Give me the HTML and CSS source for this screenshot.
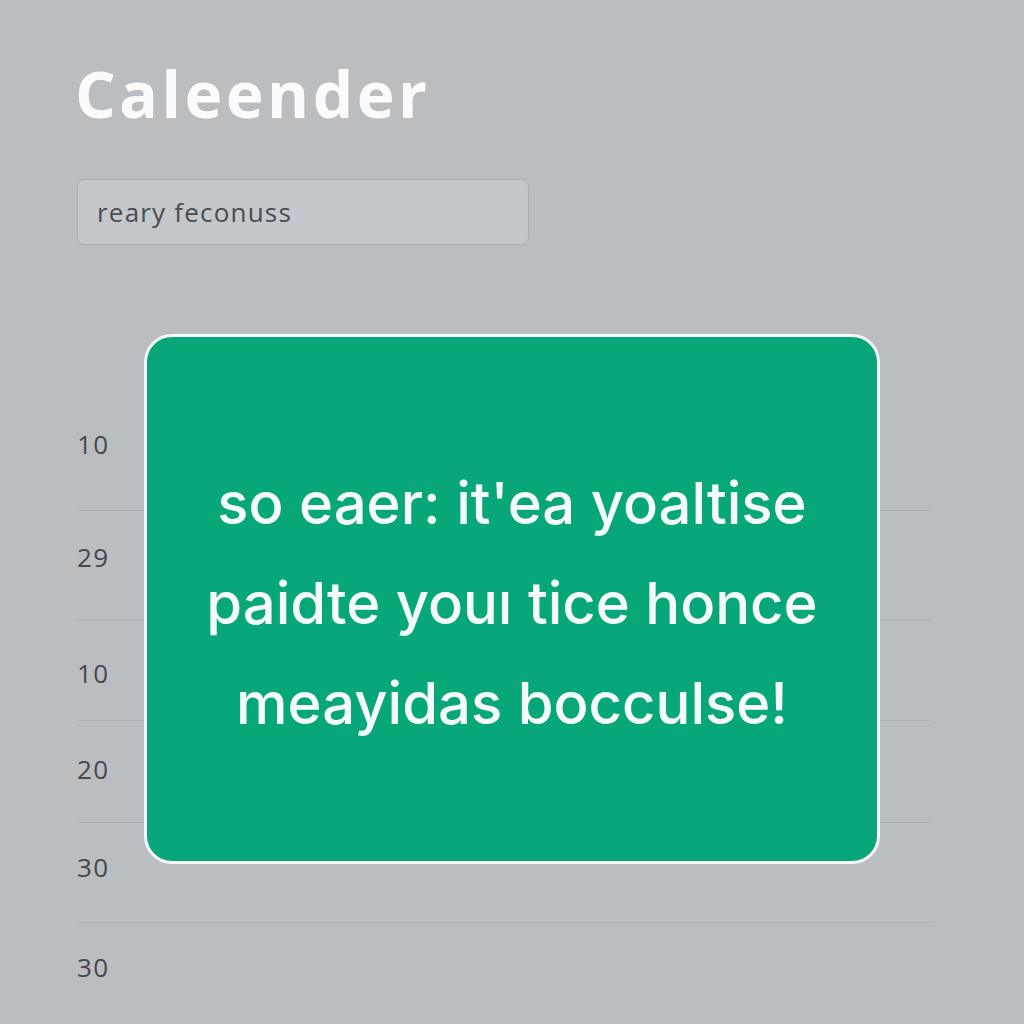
FILE: index.html
```html
<!DOCTYPE html>
<html lang="en">
<head>
    <meta charset="UTF-8">
    <meta name="viewport" content="width=device-width, initial-scale=1.0">
    <title>Caleender</title>
    <link rel="stylesheet" href="styles.css">
</head>
<body>

    <h1 class="title">Caleender</h1>

    <!-- Search -->
    <div class="search">
        <input type="text" class="search-input" value="reary feconuss">
    </div>

    <!-- Day schedule -->
    <div class="schedule">
        <div class="row row-1"><span class="time">10</span></div>
        <div class="row row-2"><span class="time">29</span></div>
        <div class="row row-3"><span class="time">10</span></div>
        <div class="row row-4"><span class="time">20</span></div>
        <div class="row row-5"><span class="time">30</span></div>
        <div class="row row-6"><span class="time">30</span></div>

        <div class="event">
            <p>so eaer: it'ea yoaltise<br>paidte youı tice honce<br>meayidas bocculse!</p>
        </div>
    </div>

</body>
</html>
```

FILE: styles.css
```css
body {
    background-color: #babec1;
    font-family: Inter, "Open Sans", sans-serif;
    margin: 0;
    padding: 0 0 0 77px;
    overflow: hidden;
    height: 1024px;
}
.title {
    color: #fbfbfb;
    font-family: "Open Sans", Inter, sans-serif;
    font-weight: 700;
    font-size: 64px;
    letter-spacing: 3.5px;
    line-height: 1;
    margin: 62px 0 0 -2px;
}
.search {
    margin-top: 53px;
    width: 452px;
}
.search-input {
    box-sizing: border-box;
    width: 100%;
    height: 66px;
    padding: 0 19px;
    background-color: #c4c8cb;
    border: 1px solid #a9aeb2;
    border-radius: 8px;
    font-family: "Open Sans", sans-serif;
    font-size: 26px;
    letter-spacing: 1.2px;
    color: #4a4d50;
    outline: none;
}
.schedule {
    position: relative;
    margin-top: 156px;
    width: 855px;
}
.row {
    display: flex;
    align-items: center;
    border-bottom: 1px solid #b0b4b8;
    box-sizing: border-box;
}
.row-1 { height: 110px; }
.row-2 { height: 110px; }
.row-3 { height: 100px; }
.row-4 { height: 102px; }
.row-5 { height: 100px; }
.row-6 { height: 100px; border-bottom: none; }
.time {
    font-family: "Open Sans", sans-serif;
    font-size: 26px;
    letter-spacing: 1.5px;
    color: #45484b;
}
.row-1 .time { margin-top: -24px; }
.row-2 .time { margin-top: -18px; }
.row-3 .time { margin-top: 4px; }
.row-4 .time { margin-top: -6px; }
.row-5 .time { margin-top: -12px; }
.row-6 .time { margin-top: -12px; }
.event {
    position: absolute;
    left: 67px;
    top: -67px;
    width: 736px;
    height: 530px;
    box-sizing: border-box;
    background-color: #08a77a;
    border: 3px solid #f4f8f6;
    border-radius: 28px;
    display: flex;
    align-items: center;
    justify-content: center;
}
.event p {
    margin: 8px 0 0 0;
    color: #f4fbf8;
    font-size: 58px;
    font-weight: 500;
    line-height: 100px;
    text-align: center;
}
```
